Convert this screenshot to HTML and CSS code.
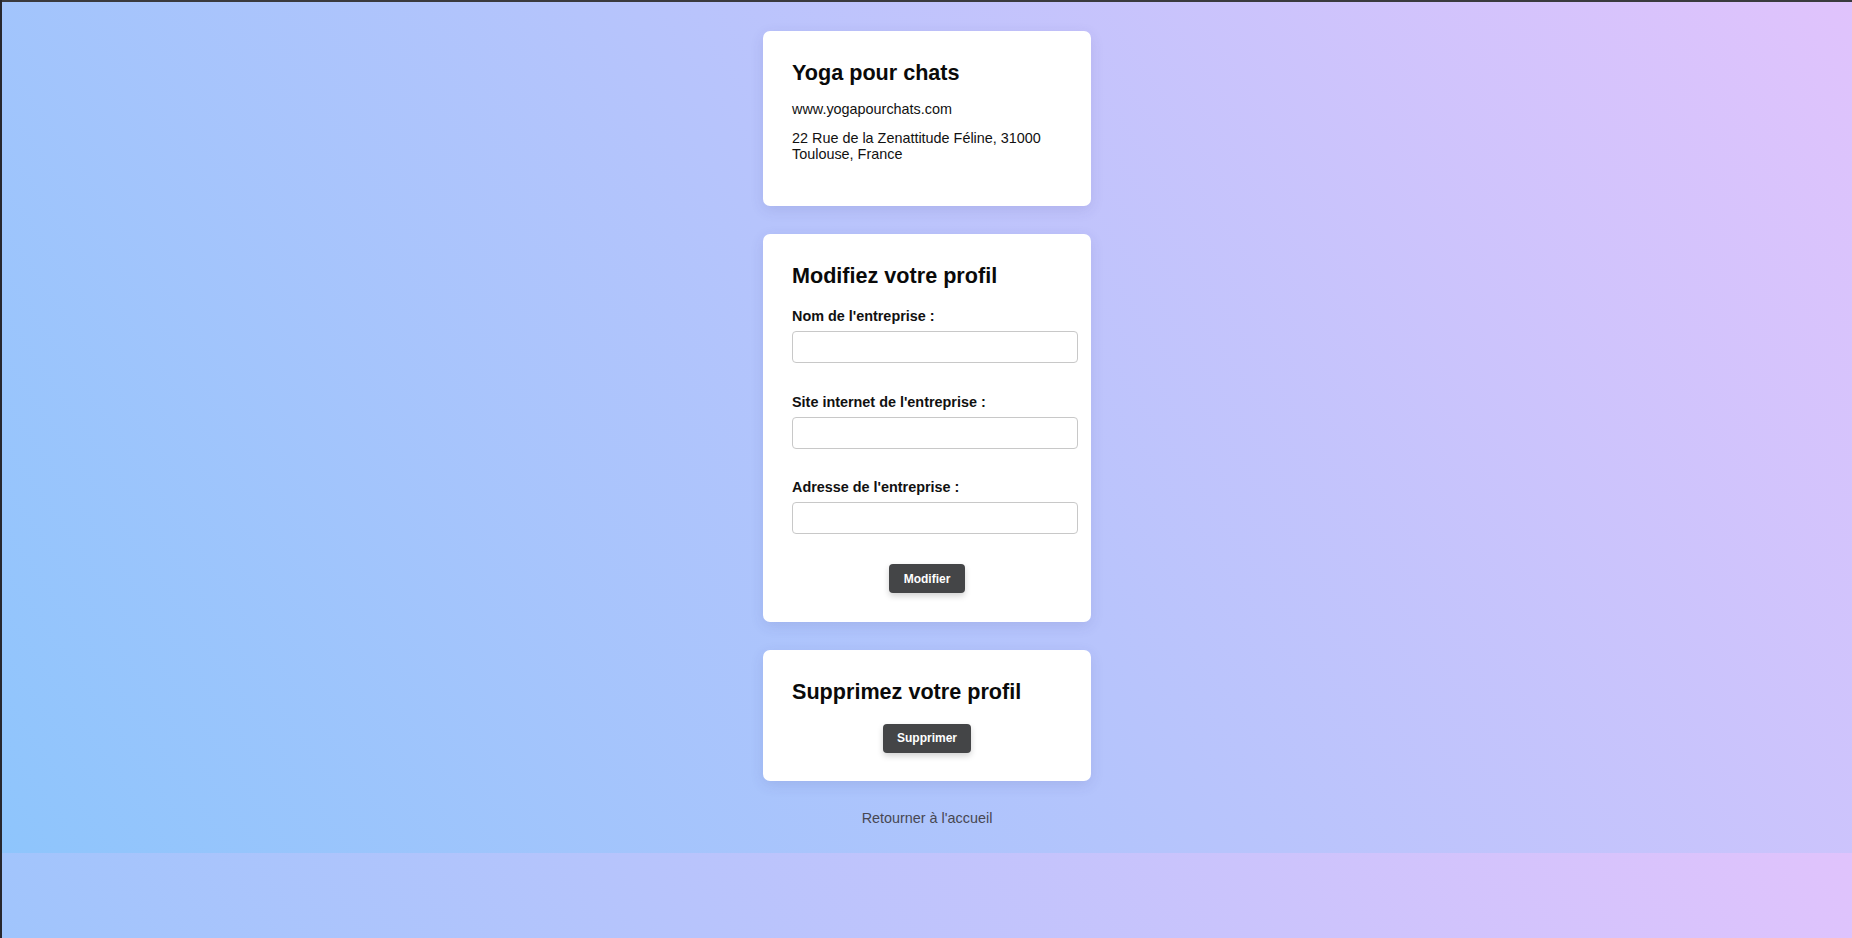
FILE: index.html
```html
<!DOCTYPE html>
<html lang="fr">
<head>
<meta charset="utf-8">
<title>Profil entreprise</title>
<link rel="stylesheet" href="styles.css">
</head>
<body>
<main class="page">
  <section class="card">
    <h2 class="card-title">Yoga pour chats</h2>
    <p class="info">www.yogapourchats.com</p>
    <p class="info info-last">22 Rue de la Zenattitude Féline, 31000 Toulouse, France</p>
  </section>

  <section class="card">
    <h2 class="card-title">Modifiez votre profil</h2>
    <form class="form">
      <div class="field">
        <label class="label" for="nom">Nom de l'entreprise :</label>
        <input class="input" id="nom" type="text">
      </div>
      <div class="field">
        <label class="label" for="site">Site internet de l'entreprise :</label>
        <input class="input" id="site" type="text">
      </div>
      <div class="field">
        <label class="label" for="adresse">Adresse de l'entreprise :</label>
        <input class="input" id="adresse" type="text">
      </div>
      <div class="actions actions-edit">
        <button class="btn" type="button">Modifier</button>
      </div>
    </form>
  </section>

  <section class="card">
    <h2 class="card-title">Supprimez votre profil</h2>
    <form class="form">
      <div class="actions">
        <button class="btn" type="button">Supprimer</button>
      </div>
    </form>
  </section>

  <a class="home-link" href="#">Retourner à l'accueil</a>
</main>
</body>
</html>
```

FILE: styles.css
```css
html {
  border-top: 2px solid #3a3a3d;
  border-left: 2px solid #27272d;
  background-color: #8ec5fc;
  background-image: linear-gradient(55deg, #8ec5fc 0%, #e0c3fc 100%);
}

html::before {
  content: "";
  position: fixed;
  left: 0;
  top: 0;
  bottom: 0;
  width: 2px;
  background: #27272d;
}

body {
  margin: 0;
  font-family: "Liberation Sans", Arial, sans-serif;
  font-size: 14.4px;
  color: #111;
}

.page {
  display: flex;
  flex-direction: column;
  align-items: center;
  gap: 28.8px;
  padding: 29px 0 27px;
}

.card {
  width: 270px;
  padding: 28.8px;
  background: #fff;
  border-radius: 7px;
  box-shadow: 0 4px 14px rgba(60, 60, 120, 0.12);
}

.card-title {
  margin: 0 0 15px;
  font-size: 21.6px;
  font-weight: bold;
  color: #0a0a0a;
}

.info {
  margin: 0 0 13px;
}

.info-last {
  margin-bottom: 15px;
}

.form {
  margin: 0;
  padding-top: 4px;
}

.field {
  margin-bottom: 30.4px;
}

.label {
  display: block;
  margin-bottom: 7px;
  font-weight: bold;
  color: #111;
}

.input {
  display: block;
  width: 100%;
  height: 16px;
  padding: 7px;
  margin: 0;
  border: 1px solid #c8c8c8;
  border-radius: 4px;
  background: #fff;
  font-family: inherit;
  font-size: 12px;
}

.actions {
  display: flex;
  justify-content: center;
}

.btn {
  padding: 7.2px 14.4px;
  border: none;
  border-radius: 4px;
  background: #444547;
  color: #fff;
  font-family: "Liberation Sans", Arial, sans-serif;
  font-size: 12px;
  font-weight: bold;
  box-shadow: 0 3px 6px rgba(0, 0, 0, 0.18);
  cursor: pointer;
}

.home-link {
  color: #474752;
  text-decoration: none;
  font-size: 14.4px;
}
```
